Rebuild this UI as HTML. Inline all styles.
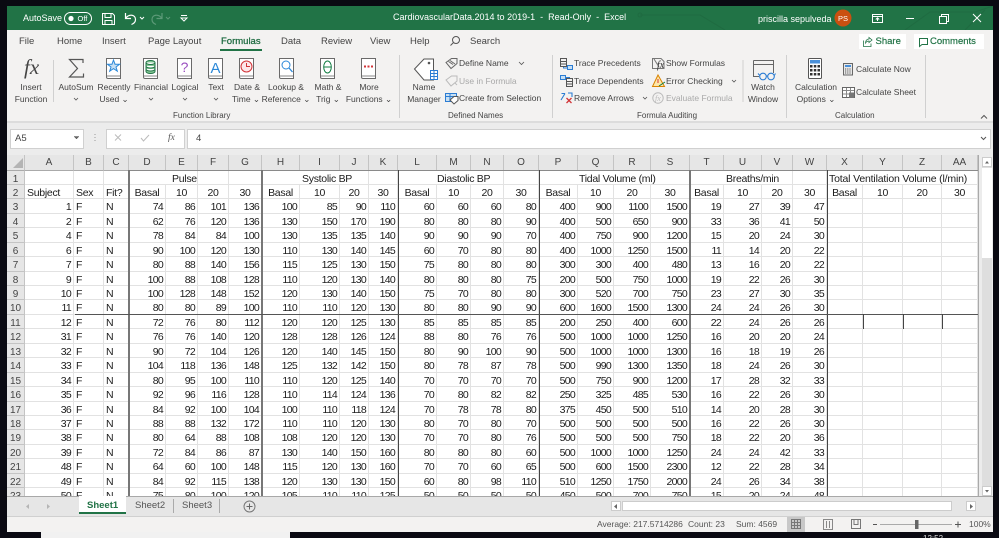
<!DOCTYPE html>
<html><head><meta charset="utf-8"><title>CardiovascularData</title>
<style>
html,body{margin:0;padding:0;background:#0a0a12;overflow:hidden;width:999px;height:538px}
body{position:relative;font-family:"Liberation Sans",sans-serif}
#root{position:absolute;left:0;top:0;width:999px;height:538px;overflow:hidden;filter:blur(.3px)}
.a{position:absolute}
.t{position:absolute;white-space:nowrap;line-height:12px;height:12px;font-size:8.5px;color:#444}
.c{transform:translateX(-50%)}
.w{color:#fff;font-size:9px}
.tb{font-size:9.5px;color:#444}
.d{color:#a9a9a9}
.g{color:#555}
#grid{position:absolute;left:7px;top:155px;width:971px;height:341px;overflow:hidden;display:grid;background:#fff;
grid-template-columns:18px 49px 30px 25px 37px 32px 31px 33px 38px 40px 29px 29px 39px 34px 33px 35px 39px 36px 37px 39px 34px 38px 31px 34px 36px 40px 39px 36px;
grid-template-rows:15.5px;grid-auto-rows:14.45px;font-size:10.5px;color:#1c1c1c;line-height:17px}
#grid i{font-style:normal;text-align:right;padding-right:2px;border-right:1px solid #e2e2e2;border-bottom:1px solid #e2e2e2;box-sizing:border-box;letter-spacing:-.7px;white-space:nowrap;overflow:visible}
#grid i.l{text-align:left;padding:0 0 0 2px;letter-spacing:-.28px}
#grid i.m{text-align:center;padding:0;letter-spacing:-.28px}
#grid b{font-weight:normal;font-size:10px;background:#e6e6e6;color:#444;text-align:center;border-right:1px solid #c4c4c4;border-bottom:1px solid #c4c4c4;box-sizing:border-box;line-height:17px;overflow:hidden}
#grid b.h{border-bottom:1px solid #aaa;line-height:16px}
</style></head><body><div id="root">

<!-- window -->
<div class="a" style="left:7px;top:6px;width:986px;height:526px;background:#f3f2f1"></div>
<div class="a" style="left:7px;top:6px;width:986px;height:24px;background:#217346"></div>
<div class="a" style="left:7px;top:30px;width:986px;height:92px;background:#f3f2f1"></div>
<div class="a" style="left:7px;top:121px;width:986px;height:2px;background:#dcdcdc"></div>
<div class="a" style="left:7px;top:123px;width:986px;height:32px;background:#ececec"></div>

<!-- title bar text -->
<span class="t w" style="left:23px;top:12px">AutoSave</span>
<span class="t w" style="left:393px;top:11px">CardiovascularData.2014 to 2019-1 &nbsp;-&nbsp; Read-Only &nbsp;-&nbsp; Excel</span>
<span class="t w" style="left:758px;top:13px">priscilla sepulveda</span>

<!-- tabs -->
<span class="t tb" style="left:19px;top:36px">File</span>
<span class="t tb" style="left:57px;top:36px">Home</span>
<span class="t tb" style="left:102px;top:36px">Insert</span>
<span class="t tb" style="left:148px;top:36px">Page Layout</span>
<span class="t tb" style="left:221px;top:36px;color:#1d6b40;-webkit-text-stroke:.25px #1d6b40">Formulas</span>
<span class="t tb" style="left:281px;top:36px">Data</span>
<span class="t tb" style="left:321px;top:36px">Review</span>
<span class="t tb" style="left:370px;top:36px">View</span>
<span class="t tb" style="left:410px;top:36px">Help</span>
<span class="t tb" style="left:470px;top:36px">Search</span>
<div class="a" style="left:220px;top:49px;width:42px;height:2px;background:#217346"></div>

<div class="a" style="left:859px;top:34px;width:47px;height:15px;background:#fff"></div>
<div class="a" style="left:914px;top:34px;width:70px;height:15px;background:#fff"></div>
<span class="t" style="left:875.500px;top:36px;font-size:9.5px;color:#217346;-webkit-text-stroke:.2px #217346">Share</span>
<span class="t" style="left:930px;top:36px;font-size:9.5px;color:#217346;-webkit-text-stroke:.2px #217346">Comments</span>

<!-- ribbon labels -->
<span class="t c" style="left:31px;top:81px">Insert</span><span class="t c" style="left:31px;top:93px">Function</span>
<span class="t c" style="left:76px;top:81px">AutoSum</span>
<span class="t c" style="left:114px;top:81px">Recently</span><span class="t c" style="left:114px;top:93px">Used ⌄</span>
<span class="t c" style="left:151px;top:81px">Financial</span>
<span class="t c" style="left:185px;top:81px">Logical</span>
<span class="t c" style="left:216px;top:81px">Text</span>
<span class="t c" style="left:247px;top:81px">Date &amp;</span><span class="t c" style="left:246px;top:93px">Time ⌄</span>
<span class="t c" style="left:286px;top:81px">Lookup &amp;</span><span class="t c" style="left:286px;top:93px">Reference ⌄</span>
<span class="t c" style="left:328px;top:81px">Math &amp;</span><span class="t c" style="left:328px;top:93px">Trig ⌄</span>
<span class="t c" style="left:369px;top:81px">More</span><span class="t c" style="left:369px;top:93px">Functions ⌄</span>
<span class="t c" style="left:424px;top:81px">Name</span><span class="t c" style="left:424px;top:93px">Manager</span>
<span class="t" style="left:459px;top:57px">Define Name</span>
<span class="t d" style="left:459px;top:75px">Use in Formula</span>
<span class="t" style="left:459px;top:92px">Create from Selection</span>
<span class="t" style="left:574px;top:57px">Trace Precedents</span>
<span class="t" style="left:574px;top:75px">Trace Dependents</span>
<span class="t" style="left:574px;top:92px">Remove Arrows</span>
<span class="t" style="left:666px;top:57px">Show Formulas</span>
<span class="t" style="left:666px;top:75px">Error Checking</span>
<span class="t d" style="left:666px;top:92px">Evaluate Formula</span>
<span class="t c" style="left:763px;top:81px">Watch</span><span class="t c" style="left:763px;top:93px">Window</span>
<span class="t c" style="left:816px;top:81px">Calculation</span><span class="t c" style="left:816px;top:93px">Options ⌄</span>
<span class="t" style="left:856px;top:63px">Calculate Now</span>
<span class="t" style="left:856px;top:86px">Calculate Sheet</span>
<span class="t" style="left:173px;top:110px;font-size:8px">Function Library</span>
<span class="t" style="left:448px;top:110px;font-size:8px">Defined Names</span>
<span class="t" style="left:637px;top:110px;font-size:8px">Formula Auditing</span>
<span class="t" style="left:835px;top:110px;font-size:8px">Calculation</span>

<!-- formula bar -->
<div class="a" style="left:10px;top:129px;width:72px;height:18px;background:#fff;border:1px solid #d0d0d0"></div>
<span class="t" style="left:15px;top:133px;font-size:9.5px">A5</span>
<div class="a" style="left:106px;top:129px;width:77px;height:18px;background:#fff;border:1px solid #d0d0d0"></div>
<div class="a" style="left:187px;top:129px;width:802px;height:18px;background:#fff;border:1px solid #d0d0d0"></div>
<span class="t" style="left:196px;top:133px;font-size:9.5px">4</span>
<span class="t" style="left:168px;top:133px;font:italic 9.5px 'Liberation Serif',serif;color:#555">fx</span>

<!-- grid -->
<div id="grid">
<b class="h"></b><b class="h">A</b><b class="h">B</b><b class="h">C</b><b class="h">D</b><b class="h">E</b><b class="h">F</b><b class="h">G</b><b class="h">H</b><b class="h">I</b><b class="h">J</b><b class="h">K</b><b class="h">L</b><b class="h">M</b><b class="h">N</b><b class="h">O</b><b class="h">P</b><b class="h">Q</b><b class="h">R</b><b class="h">S</b><b class="h">T</b><b class="h">U</b><b class="h">V</b><b class="h">W</b><b class="h">X</b><b class="h">Y</b><b class="h">Z</b><b class="h">AA</b>
<b>1</b><i></i><i></i><i></i><i class="l" style="grid-column:span 2;padding-left:43px">Pulse</i><i></i><i></i><i class="l" style="grid-column:span 3;padding-left:40px">Systolic BP</i><i></i><i class="l" style="grid-column:span 3;padding-left:39px">Diastolic BP</i><i></i><i class="l" style="grid-column:span 4;padding-left:40px">Tidal Volume (ml)</i><i class="l" style="grid-column:span 3;padding-left:36px">Breaths/min</i><i></i><i class="l" style="grid-column:span 4;padding-left:2px;letter-spacing:-.17px">Total Ventilation Volume (l/min)</i>
<b>2</b><i class="l">Subject</i><i class="l">Sex</i><i class="l">Fit?</i><i class="m">Basal</i><i class="m">10</i><i class="m">20</i><i class="m">30</i><i class="m">Basal</i><i class="m">10</i><i class="m">20</i><i class="m">30</i><i class="m">Basal</i><i class="m">10</i><i class="m">20</i><i class="m">30</i><i class="m">Basal</i><i class="m">10</i><i class="m">20</i><i class="m">30</i><i class="m">Basal</i><i class="m">10</i><i class="m">20</i><i class="m">30</i><i class="m">Basal</i><i class="m">10</i><i class="m">20</i><i class="m">30</i>
<b>3</b><i>1</i><i class="l">F</i><i class="l">N</i><i>74</i><i>86</i><i>101</i><i>136</i><i>100</i><i>85</i><i>90</i><i>110</i><i>60</i><i>60</i><i>60</i><i>80</i><i>400</i><i>900</i><i>1100</i><i>1500</i><i>19</i><i>27</i><i>39</i><i>47</i><i></i><i></i><i></i><i></i>
<b>4</b><i>2</i><i class="l">F</i><i class="l">N</i><i>62</i><i>76</i><i>120</i><i>136</i><i>130</i><i>150</i><i>170</i><i>190</i><i>80</i><i>80</i><i>80</i><i>90</i><i>400</i><i>500</i><i>650</i><i>900</i><i>33</i><i>36</i><i>41</i><i>50</i><i></i><i></i><i></i><i></i>
<b>5</b><i>4</i><i class="l">F</i><i class="l">N</i><i>78</i><i>84</i><i>84</i><i>100</i><i>130</i><i>135</i><i>135</i><i>140</i><i>90</i><i>90</i><i>90</i><i>70</i><i>400</i><i>750</i><i>900</i><i>1200</i><i>15</i><i>20</i><i>24</i><i>30</i><i></i><i></i><i></i><i></i>
<b>6</b><i>6</i><i class="l">F</i><i class="l">N</i><i>90</i><i>100</i><i>120</i><i>130</i><i>110</i><i>130</i><i>140</i><i>145</i><i>60</i><i>70</i><i>80</i><i>80</i><i>400</i><i>1000</i><i>1250</i><i>1500</i><i>11</i><i>14</i><i>20</i><i>22</i><i></i><i></i><i></i><i></i>
<b>7</b><i>7</i><i class="l">F</i><i class="l">N</i><i>80</i><i>88</i><i>140</i><i>156</i><i>115</i><i>125</i><i>130</i><i>150</i><i>75</i><i>80</i><i>80</i><i>80</i><i>300</i><i>300</i><i>400</i><i>480</i><i>13</i><i>16</i><i>20</i><i>22</i><i></i><i></i><i></i><i></i>
<b>8</b><i>9</i><i class="l">F</i><i class="l">N</i><i>100</i><i>88</i><i>108</i><i>128</i><i>110</i><i>120</i><i>130</i><i>140</i><i>80</i><i>80</i><i>80</i><i>75</i><i>200</i><i>500</i><i>750</i><i>1000</i><i>19</i><i>22</i><i>26</i><i>30</i><i></i><i></i><i></i><i></i>
<b>9</b><i>10</i><i class="l">F</i><i class="l">N</i><i>100</i><i>128</i><i>148</i><i>152</i><i>120</i><i>130</i><i>140</i><i>150</i><i>75</i><i>70</i><i>80</i><i>80</i><i>300</i><i>520</i><i>700</i><i>750</i><i>23</i><i>27</i><i>30</i><i>35</i><i></i><i></i><i></i><i></i>
<b>10</b><i>11</i><i class="l">F</i><i class="l">N</i><i>80</i><i>80</i><i>89</i><i>100</i><i>110</i><i>110</i><i>120</i><i>130</i><i>80</i><i>80</i><i>90</i><i>90</i><i>600</i><i>1600</i><i>1500</i><i>1300</i><i>24</i><i>24</i><i>26</i><i>30</i><i></i><i></i><i></i><i></i>
<b>11</b><i>12</i><i class="l">F</i><i class="l">N</i><i>72</i><i>76</i><i>80</i><i>112</i><i>120</i><i>120</i><i>125</i><i>130</i><i>85</i><i>85</i><i>85</i><i>85</i><i>200</i><i>250</i><i>400</i><i>600</i><i>22</i><i>24</i><i>26</i><i>26</i><i></i><i></i><i></i><i></i>
<b>12</b><i>31</i><i class="l">F</i><i class="l">N</i><i>76</i><i>76</i><i>140</i><i>120</i><i>128</i><i>128</i><i>126</i><i>124</i><i>88</i><i>80</i><i>76</i><i>76</i><i>500</i><i>1000</i><i>1000</i><i>1250</i><i>16</i><i>20</i><i>20</i><i>24</i><i></i><i></i><i></i><i></i>
<b>13</b><i>32</i><i class="l">F</i><i class="l">N</i><i>90</i><i>72</i><i>104</i><i>126</i><i>120</i><i>140</i><i>145</i><i>150</i><i>80</i><i>90</i><i>100</i><i>90</i><i>500</i><i>1000</i><i>1000</i><i>1300</i><i>16</i><i>18</i><i>19</i><i>26</i><i></i><i></i><i></i><i></i>
<b>14</b><i>33</i><i class="l">F</i><i class="l">N</i><i>104</i><i>118</i><i>136</i><i>148</i><i>125</i><i>132</i><i>142</i><i>150</i><i>80</i><i>78</i><i>87</i><i>78</i><i>500</i><i>990</i><i>1300</i><i>1350</i><i>18</i><i>24</i><i>26</i><i>30</i><i></i><i></i><i></i><i></i>
<b>15</b><i>34</i><i class="l">F</i><i class="l">N</i><i>80</i><i>95</i><i>100</i><i>110</i><i>110</i><i>120</i><i>125</i><i>140</i><i>70</i><i>70</i><i>70</i><i>70</i><i>500</i><i>750</i><i>900</i><i>1200</i><i>17</i><i>28</i><i>32</i><i>33</i><i></i><i></i><i></i><i></i>
<b>16</b><i>35</i><i class="l">F</i><i class="l">N</i><i>92</i><i>96</i><i>116</i><i>128</i><i>110</i><i>114</i><i>124</i><i>136</i><i>70</i><i>80</i><i>82</i><i>82</i><i>250</i><i>325</i><i>485</i><i>530</i><i>16</i><i>22</i><i>26</i><i>30</i><i></i><i></i><i></i><i></i>
<b>17</b><i>36</i><i class="l">F</i><i class="l">N</i><i>84</i><i>92</i><i>100</i><i>104</i><i>100</i><i>110</i><i>118</i><i>124</i><i>70</i><i>78</i><i>78</i><i>80</i><i>375</i><i>450</i><i>500</i><i>510</i><i>14</i><i>20</i><i>28</i><i>30</i><i></i><i></i><i></i><i></i>
<b>18</b><i>37</i><i class="l">F</i><i class="l">N</i><i>88</i><i>88</i><i>132</i><i>172</i><i>110</i><i>110</i><i>120</i><i>130</i><i>80</i><i>70</i><i>80</i><i>70</i><i>500</i><i>500</i><i>500</i><i>500</i><i>16</i><i>22</i><i>26</i><i>30</i><i></i><i></i><i></i><i></i>
<b>19</b><i>38</i><i class="l">F</i><i class="l">N</i><i>80</i><i>64</i><i>88</i><i>108</i><i>108</i><i>120</i><i>120</i><i>130</i><i>70</i><i>70</i><i>80</i><i>76</i><i>500</i><i>500</i><i>500</i><i>750</i><i>18</i><i>22</i><i>20</i><i>36</i><i></i><i></i><i></i><i></i>
<b>20</b><i>39</i><i class="l">F</i><i class="l">N</i><i>72</i><i>84</i><i>86</i><i>87</i><i>130</i><i>140</i><i>150</i><i>160</i><i>80</i><i>80</i><i>80</i><i>60</i><i>500</i><i>1000</i><i>1000</i><i>1250</i><i>24</i><i>24</i><i>42</i><i>33</i><i></i><i></i><i></i><i></i>
<b>21</b><i>48</i><i class="l">F</i><i class="l">N</i><i>64</i><i>60</i><i>100</i><i>148</i><i>115</i><i>120</i><i>130</i><i>160</i><i>70</i><i>70</i><i>60</i><i>65</i><i>500</i><i>600</i><i>1500</i><i>2300</i><i>12</i><i>22</i><i>28</i><i>34</i><i></i><i></i><i></i><i></i>
<b>22</b><i>49</i><i class="l">F</i><i class="l">N</i><i>84</i><i>92</i><i>115</i><i>138</i><i>120</i><i>130</i><i>130</i><i>150</i><i>60</i><i>80</i><i>98</i><i>110</i><i>510</i><i>1250</i><i>1750</i><i>2000</i><i>24</i><i>26</i><i>34</i><i>38</i><i></i><i></i><i></i><i></i>
<b>23</b><i>50</i><i class="l">F</i><i class="l">N</i><i>75</i><i>80</i><i>100</i><i>120</i><i>105</i><i>110</i><i>110</i><i>125</i><i>50</i><i>50</i><i>50</i><i>50</i><i>450</i><i>500</i><i>700</i><i>750</i><i>15</i><i>20</i><i>24</i><i>48</i><i></i><i></i><i></i><i></i>
</div>

<!-- heavy cell borders -->
<div class="a" style="left:129px;top:170px;width:849px;height:1px;background:#8a8a8a"></div>
<div class="a" style="left:128px;top:170px;width:2px;height:326px;background:#777"></div>
<div class="a" style="left:261px;top:170px;width:2px;height:326px;background:#777"></div>
<div class="a" style="left:398px;top:170px;width:1px;height:326px;background:#444"></div>
<div class="a" style="left:539px;top:170px;width:1px;height:326px;background:#444"></div>
<div class="a" style="left:689px;top:170px;width:2px;height:326px;background:#777"></div>
<div class="a" style="left:827px;top:170px;width:1px;height:326px;background:#444"></div>
<div class="a" style="left:75px;top:314px;width:903px;height:1px;background:#555"></div>
<div class="a" style="left:863px;top:314px;width:1px;height:15px;background:#444"></div>
<div class="a" style="left:903px;top:314px;width:1px;height:15px;background:#444"></div>
<div class="a" style="left:942px;top:314px;width:1px;height:15px;background:#444"></div>
<div class="a" style="left:978px;top:155px;width:1px;height:341px;background:#aaa"></div>

<!-- vertical scrollbar -->
<div class="a" style="left:979px;top:155px;width:14px;height:342px;background:#ececec"></div>
<div class="a" style="left:982px;top:157px;width:10px;height:339px;background:#dedede"></div>
<div class="a" style="left:982px;top:157px;width:10px;height:10px;background:#fff;border:1px solid #ccc;box-sizing:border-box"></div>
<div class="a" style="left:982px;top:168px;width:10px;height:90px;background:#fff"></div>
<div class="a" style="left:982px;top:486px;width:10px;height:10px;background:#fff;border:1px solid #ccc;box-sizing:border-box"></div>

<!-- sheet tabs bar -->
<div class="a" style="left:7px;top:496px;width:986px;height:20px;background:#e6e6e6;border-top:1px solid #a8a8a8;box-sizing:border-box"></div>
<div class="a" style="left:79px;top:496px;width:47px;height:18px;background:#fff"></div>
<div class="a" style="left:79px;top:512px;width:47px;height:2px;background:#217346"></div>
<span class="t" style="left:87px;top:500px;font-size:9.5px;font-weight:bold;color:#217346">Sheet1</span>
<span class="t" style="left:135px;top:500px;font-size:9.5px;color:#555">Sheet2</span>
<span class="t" style="left:182px;top:500px;font-size:9.5px;color:#555">Sheet3</span>
<div class="a" style="left:173px;top:499px;width:1px;height:14px;background:#aaa"></div>
<div class="a" style="left:219px;top:499px;width:1px;height:14px;background:#aaa"></div>
<!-- h scrollbar -->
<div class="a" style="left:611px;top:501px;width:10px;height:10px;background:#fff;border:1px solid #ccc;box-sizing:border-box"></div>
<div class="a" style="left:622px;top:501px;width:330px;height:10px;background:#fff;border:1px solid #ccc;box-sizing:border-box"></div>
<div class="a" style="left:966px;top:501px;width:10px;height:10px;background:#fff;border:1px solid #ccc;box-sizing:border-box"></div>

<!-- status bar -->
<div class="a" style="left:7px;top:516px;width:986px;height:16px;background:#f3f2f1;border-top:1px solid #d0d0d0;box-sizing:border-box"></div>
<div class="a" style="left:787px;top:517px;width:18px;height:15px;background:#c8c8c8"></div>
<span class="t g" style="left:597px;top:518px">Average: 217.5714286</span>
<span class="t g" style="left:688px;top:518px">Count: 23</span>
<span class="t g" style="left:736px;top:518px">Sum: 4569</span>
<span class="t g" style="left:969px;top:518px">100%</span>

<!-- bottom strip -->
<div class="a" style="left:41px;top:532px;width:249px;height:6px;background:#f1f1f1"></div>
<span class="t" style="left:923px;top:533px;font-size:8px;color:#ddd">12:52</span>

<!-- all icons -->
<svg class="a" style="left:0;top:0" width="999" height="538" viewBox="0 0 999 538" fill="none">
<defs><clipPath id="tb"><rect x="7" y="6" width="986" height="24"/></clipPath></defs>
<!-- title bar circuit decoration -->
<g stroke="#1f6b41" stroke-width="1" clip-path="url(#tb)">
<path d="M640 15H700L725 30M905 30L930 12H975L993 6M965 30L985 10"/>
<circle cx="640" cy="15" r="2"/>
</g>
<!-- QAT -->
<rect x="64.5" y="12.5" width="27" height="12" rx="6" stroke="#fff"/>
<circle cx="71" cy="18.5" r="2.6" fill="#fff"/>
<text x="77.500" y="21" font-family="Liberation Sans" font-size="7.500" fill="#fff">Off</text>
<path d="M102.500 13.500H112.500L114.500 15.500V24.500H102.500Z M105 13.500V17.500H111V13.500 M105 24.500V20.500H112V24.500" stroke="#fff"/>
<path d="M125.500 13V18.500H131 M125.500 18.500C129 13.500 135.500 14.500 135.500 19.500C135.500 22 134 23.500 131.500 24.500" stroke="#fff" stroke-width="1.200"/>
<path d="M140 17l2 2 2-2" stroke="#fff"/>
<path d="M162 13V18.500H156.500 M162 18.500C158.500 13.500 152 14.500 152 19.500C152 22 153.500 23.500 156 24.500" stroke="#5c9a78" stroke-width="1.200"/>
<path d="M166 17l2 2 2-2" stroke="#5c9a78"/>
<path d="M181 15.500H187 M181 18l3 3 3-3Z" stroke="#fff"/>
<!-- user -->
<circle cx="843" cy="18" r="8.500" fill="#ca5010"/>
<text x="843" y="21" font-family="Liberation Sans" font-size="7.500" fill="#fff" text-anchor="middle">PS</text>
<path d="M872.500 14.500H882.500V22.500H872.500Z" stroke="#fff"/><path d="M872.500 16.500H882.500" stroke="#fff"/><path d="M877.500 21V18M875.800 19.500l1.700-1.700 1.700 1.700" stroke="#fff"/>
<path d="M906 18.500H914" stroke="#fff"/>
<path d="M939.500 16.500H946.500V23.500H939.500Z M941.500 16.500V14.500H948.500V21.500H946.500" stroke="#fff"/>
<path d="M973 14L981 22M981 14L973 22" stroke="#fff"/>
<!-- search, share, comment -->
<circle cx="456" cy="40" r="3.500" stroke="#555"/><path d="M453.500 42.500L450.500 45.500" stroke="#555"/>
<path d="M863.500 40.500V46.500H871V43.500 M865.500 43C865.500 40 867.500 39 869 39V37.500L872 40 869 42.500V41C867.500 41 866.500 41.500 865.500 43Z" stroke="#217346" stroke-width=".8"/>
<path d="M919.500 38.500H927.500V44.500H922L919.500 46.500Z" stroke="#217346"/>
<!-- separators -->
<g stroke="#d0d0d0"><path d="M53.500 60V102M399.500 55V118M552.500 55V118M743 60V102M786.500 55V118M925.500 55V118"/></g>
<!-- fx -->
<text x="24" y="74" font-family="Liberation Serif" font-style="italic" font-size="21" fill="#444">fx</text>
<!-- sigma -->
<path d="M83 63V59.500H69.500L77.500 68.500 69.500 77H83.500V73.500" stroke="#555" stroke-width="1.200"/>
<path d="M74 98l2 2 2-2M149 98l2 2 2-2M183 98l2 2 2-2M214 98l2 2 2-2" stroke="#555" stroke-width=".8"/>
<!-- books -->
<g stroke="#6a6a6a" fill="#fff">
<path d="M106.500 58.500H120.500V78.500H108A1.500 1.500 0 0 1 106.500 77Z"/>
<path d="M143.500 58.500H157.500V78.500H145A1.500 1.500 0 0 1 143.500 77Z"/>
<path d="M177.500 58.500H191.500V78.500H179A1.500 1.500 0 0 1 177.500 77Z"/>
<path d="M208.500 58.500H222.500V78.500H210A1.500 1.500 0 0 1 208.500 77Z"/>
<path d="M239.500 58.500H253.500V78.500H241A1.500 1.500 0 0 1 239.500 77Z"/>
<path d="M279.500 58.500H293.500V78.500H281A1.500 1.500 0 0 1 279.500 77Z"/>
<path d="M320.500 58.500H334.500V78.500H322A1.500 1.500 0 0 1 320.500 77Z"/>
<path d="M361.500 58.500H375.500V78.500H363A1.500 1.500 0 0 1 361.500 77Z"/>
</g>
<g stroke="#888"><path d="M107 76H120M144 76H157M178 76H191M209 76H222M240 76H253M280 76H293M321 76H334M362 76H375"/></g>
<polygon points="113.500,60 115,64.200 119.600,64.200 116,67 117.300,71.200 113.500,68.600 109.700,71.200 111,67 107.400,64.200 112,64.200" stroke="#2b88d8" fill="#c7e0f4"/>
<path d="M146 62.500a4.500 2 0 0 1 9 0V71.500a4.500 2 0 0 1-9 0Z M146 62.500a4.500 2 0 0 0 9 0 M146 66a4.500 2 0 0 0 9 0 M146 69a4.500 2 0 0 0 9 0" stroke="#217346" fill="#86c796"/>
<text x="184.500" y="72" font-family="Liberation Sans" font-size="14" fill="#9a4fc0" text-anchor="middle">?</text>
<text x="215.500" y="73" font-family="Liberation Sans" font-size="15" fill="#2b88d8" text-anchor="middle">A</text>
<circle cx="246.500" cy="66.500" r="5.500" stroke="#d13438" fill="#fde7e9"/><path d="M246.500 63V66.500H250" stroke="#d13438"/>
<circle cx="286" cy="65" r="4" stroke="#2b88d8"/><path d="M289 68L292.500 72" stroke="#2b88d8" stroke-width="1.300"/>
<ellipse cx="327.500" cy="67" rx="3.800" ry="6" stroke="#107c41"/><path d="M324 67H331" stroke="#107c41"/>
<path d="M364 65.500h2v2h-2zM367.500 65.500h2v2h-2zM371 65.500h2v2h-2z" fill="#d13438"/>
<!-- name manager -->
<path d="M414.500 69L424 59H433.500V80H424Z" stroke="#555" fill="#fff"/>
<circle cx="429" cy="63" r="1.300" fill="#555"/>
<rect x="430.500" y="70.500" width="7" height="9" fill="#fff" stroke="#2b7cd3"/>
<path d="M431 73.500h6M431 76.500h6M434 71v8" stroke="#2b7cd3"/>
<!-- define / use / create -->
<path d="M446 62.500L451.500 58.500H457V63.500L451 68.500Z M448.500 61.500L453 64.500M450 60.500L455 64" stroke="#666"/>
<path d="M446 80L451.500 76H457V81L451 86Z" stroke="#bbb"/><path d="M455 83l2 2" stroke="#bbb"/>
<path d="M519 62l2.500 2.500 2.500-2.500" stroke="#555" stroke-width=".8"/>
<rect x="445.500" y="93.500" width="11" height="8" stroke="#2b7cd3" fill="#c7e0f4"/><path d="M446 96.500h10M450 94v7" stroke="#2b7cd3"/>
<path d="M450 100L454 96.500H458V100.500L454 104Z" stroke="#555" fill="#fff"/>
<!-- trace -->
<path d="M560.500 58.500H566.500V66.500H560.500ZM560.500 61.500H566.500M560.500 64H566.500" stroke="#555"/>
<rect x="567.500" y="65.500" width="5" height="4" stroke="#2b7cd3" fill="#c7e0f4"/><path d="M563.500 67V68H567" stroke="#2b7cd3"/>
<rect x="560.500" y="75.500" width="5" height="4" stroke="#2b7cd3" fill="#c7e0f4"/>
<path d="M566.500 78.500H572.500V86.500H566.500ZM566.500 81.500H572.500M566.500 84H572.500" stroke="#555"/><path d="M565 77.500H569.500V78" stroke="#2b7cd3"/>
<path d="M561 100L565 93.500M565 93.500H561.500M568 93H572V97" stroke="#2b7cd3" stroke-width="1.100"/>
<path d="M566.500 98L571.500 103M571.500 98L566.500 103" stroke="#d13438" stroke-width="1.300"/>
<path d="M643 97l2 2 2-2M732 80l2 2 2-2" stroke="#555" stroke-width=".8"/>
<!-- show formulas etc -->
<path d="M652.500 58.500H661L664 61.500V68.500H652.500Z M654 59L659 67" stroke="#777"/>
<text x="657" y="68" font-family="Liberation Serif" font-style="italic" font-size="10" fill="#333">fx</text>
<path d="M658 75L664.500 86.500H652.500Z" stroke="#d98300" fill="#ffe7a8"/><path d="M658 79V83" stroke="#d13438"/><path d="M659 86L665 82" stroke="#107c41"/>
<circle cx="658" cy="98" r="5.200" stroke="#bbb"/><text x="655" y="101" font-family="Liberation Serif" font-style="italic" font-size="8" fill="#bbb">fx</text>
<!-- watch -->
<path d="M753.500 60.500H773.500V73M753.500 60.500V76.500H759M753.500 64.500H773.500" stroke="#666"/>
<circle cx="763" cy="76.500" r="3.300" stroke="#2b7cd3" stroke-width="1.100"/><circle cx="771" cy="76.500" r="3.300" stroke="#2b7cd3" stroke-width="1.100"/><path d="M766.300 76H767.700M759.800 75.500L758 73.500M774.300 75.500L775.500 73.500" stroke="#2b7cd3"/>
<!-- calc options -->
<rect x="808.500" y="58.500" width="13" height="20" rx="1" fill="#fff" stroke="#555"/>
<rect x="810" y="60" width="10" height="3.500" fill="#4a90d9"/>
<path d="M810 65h2.500v2.500H810zM813.800 65h2.500v2.500h-2.500zM817.500 65h2.500v2.500h-2.500zM810 69h2.500v2.500H810zM813.800 69h2.500v2.500h-2.500zM817.500 69h2.500v2.500h-2.500zM810 73h2.500v2.500H810zM813.800 73h2.500v2.500h-2.500zM817.500 73h2.500v2.500h-2.500z" fill="#333"/>
<rect x="843.500" y="63.500" width="9" height="11.500" fill="#e8e8e8" stroke="#666"/>
<rect x="845" y="65" width="6" height="2" fill="#4a90d9"/><path d="M845 69h6M845 71h6M845 73h6" stroke="#555" stroke-dasharray="1.200 1"/>
<rect x="842.500" y="87.500" width="12" height="10" stroke="#666" fill="#fff"/><path d="M843 90.500h11M843 94h11M846.500 88v9M850.500 88v9" stroke="#888"/>
<rect x="849" y="92.500" width="5" height="5.500" fill="#777"/>
<path d="M981 118.500l3-3 3 3" stroke="#555"/>
<!-- formula bar -->
<path d="M74 136.500l2.500 2.500 2.500-2.500Z" fill="#666" stroke="#666" stroke-width=".5"/>
<path d="M95 134v1M95 137v1M95 140v1" stroke="#999"/>
<path d="M115 134.500l6 6M121 134.500l-6 6" stroke="#bbb"/>
<path d="M141 138l2.500 3 5.500-6" stroke="#bbb"/>
<path d="M981 137l2.500 2.500 2.500-2.500" stroke="#555"/>
<!-- corner -->
<path d="M23 158V168H13Z" fill="#b4b4b4"/>
<!-- v scroll arrows -->
<path d="M985 163.500l2-2.500 2 2.500Z" fill="#666"/><path d="M985 490l2 2.500 2-2.500Z" fill="#666"/>
<!-- nav arrows -->
<path d="M29 504l-3 2.500 3 2.500Z" fill="#b5b5b5"/><path d="M47 504l3 2.500-3 2.500Z" fill="#b5b5b5"/>
<circle cx="249.500" cy="506.500" r="5.500" stroke="#777"/><path d="M246.500 506.500H252.500M249.500 503.500V509.500" stroke="#666"/>
<path d="M617 504l-3 2.500 3 2.500Z" fill="#666"/><path d="M970 504l3 2.500-3 2.500Z" fill="#666"/>
<!-- status icons -->
<path d="M791.500 519.500H800.500V528.500H791.500ZM791.500 522.500H800.500M791.500 525.500H800.500M794.500 519.500V528.500M797.500 519.500V528.500" stroke="#777"/>
<path d="M823.500 519.500H832.500V529.500H823.500ZM826.500 521V528M829.500 521V528" stroke="#888"/>
<path d="M851.500 519.500H860.500V528.500H851.500ZM854 519.500V524.500H858V519.500" stroke="#777"/>
<path d="M873 524.500H877" stroke="#555"/>
<path d="M880 524.500H952" stroke="#aaa"/>
<rect x="915" y="520" width="3.500" height="9" fill="#666"/>
<path d="M955 524.500H961M958 521.500V527.500" stroke="#555"/>
</svg>
</div></body></html>
